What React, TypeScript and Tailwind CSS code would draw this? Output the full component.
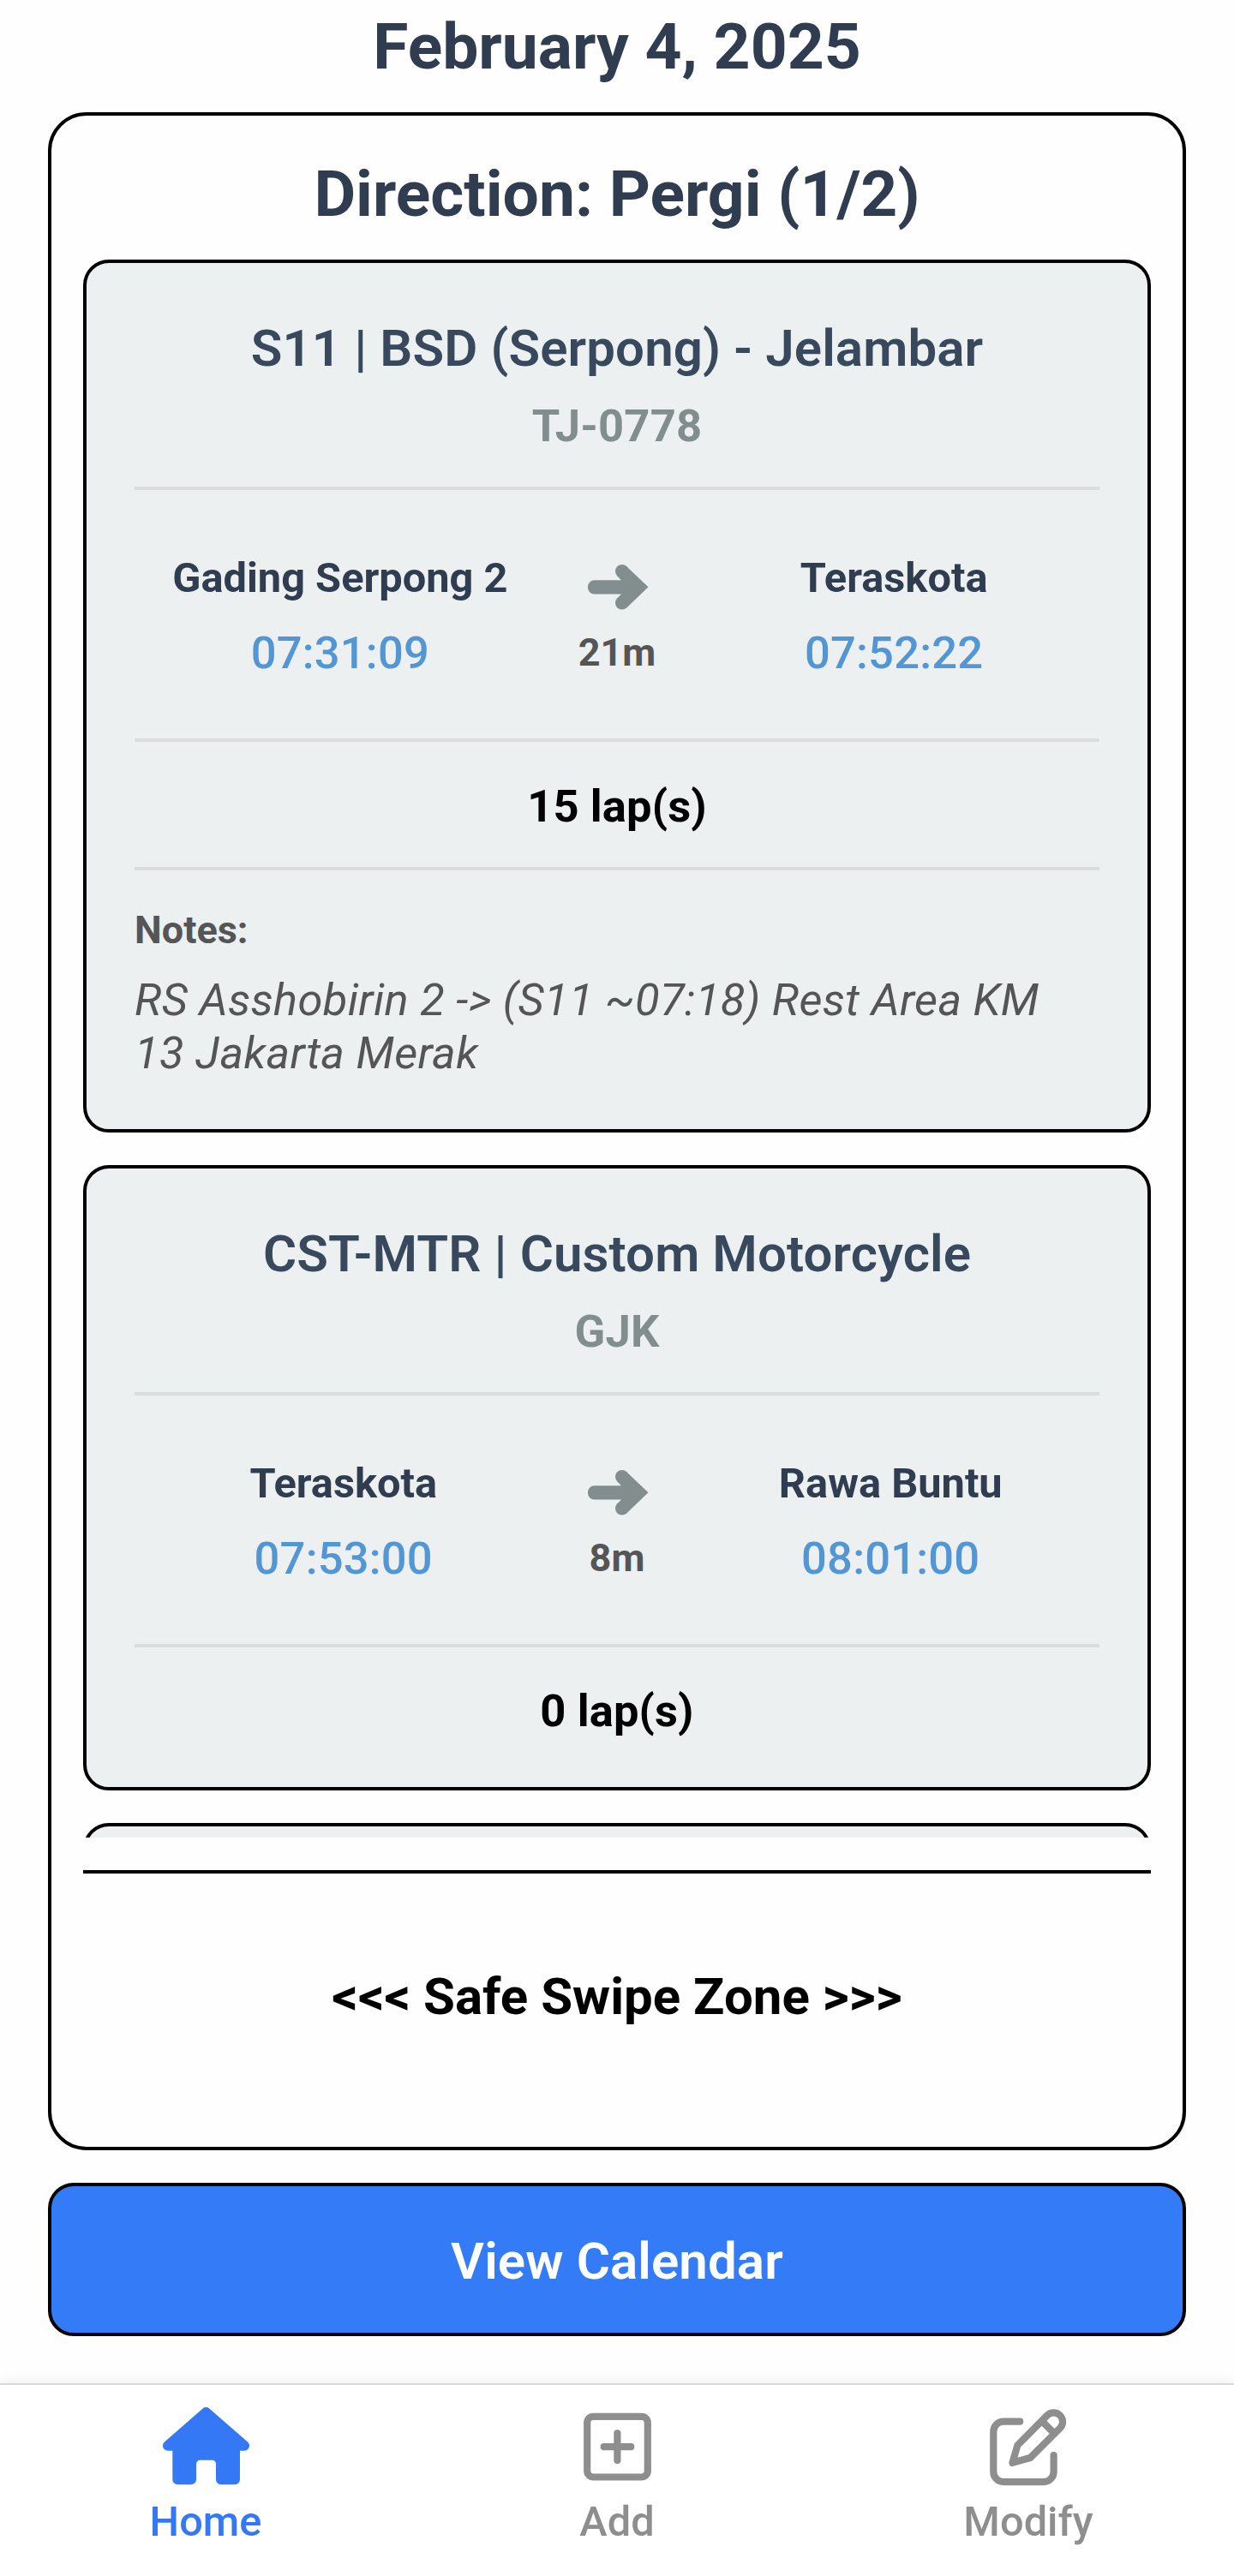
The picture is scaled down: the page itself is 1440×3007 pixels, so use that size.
import React from "react";

type Stop = { name: string; time: string };
type Trip = {
  title: string;
  vehicle: string;
  from: Stop;
  to: Stop;
  duration: string;
  laps: number;
  notes?: string;
};

const trips: Trip[] = [
  {
    title: "S11 | BSD (Serpong) - Jelambar",
    vehicle: "TJ-0778",
    from: { name: "Gading Serpong 2", time: "07:31:09" },
    to: { name: "Teraskota", time: "07:52:22" },
    duration: "21m",
    laps: 15,
    notes: "RS Asshobirin 2 -> (S11 ~07:18) Rest Area KM 13 Jakarta Merak",
  },
  {
    title: "CST-MTR | Custom Motorcycle",
    vehicle: "GJK",
    from: { name: "Teraskota", time: "07:53:00" },
    to: { name: "Rawa Buntu", time: "08:01:00" },
    duration: "8m",
    laps: 0,
  },
];

function ArrowIcon() {
  return (
    <svg className="block h-[60px] w-[75px]" viewBox="3 0 75 60" fill="#828e8d">
      <rect x="6" y="22.2" width="56" height="16.3" rx="7.6" />
      <circle cx="45.8" cy="11.8" r="7.8" />
      <circle cx="45.8" cy="48.8" r="7.8" />
      <path d="M51.2 6.2 76.5 30.3 51.2 54.4 40.2 43.4 45 38.5V22.2L40.2 17.2Z" />
    </svg>
  );
}

function HomeIcon() {
  return (
    <svg className="block h-[140px] w-[160px]" viewBox="0 0 160 140" fill="#3478f6">
      <path d="M76.6 31.6a5.6 5.6 0 0 1 7.6 0L129 70.5c1.400 1.300 2 2.700 2 4.500a5.700 5.700 0 0 1-5.700 5.700H120v33.600a6 6 0 0 1-6 6H98a6 6 0 0 1-6-6V96.200a4.500 4.500 0 0 0-4.500-4.500h-14a4.500 4.500 0 0 0-4.500 4.500v18.100a6 6 0 0 1-6 6H47.300a6 6 0 0 1-6-6V80.700h-5.600A5.700 5.700 0 0 1 30 75c0-1.800.6-3.200 2-4.500Z" />
    </svg>
  );
}

function AddIcon() {
  return (
    <svg className="block h-[140px] w-[160px]" viewBox="0 0 160 140" fill="none" stroke="#8e8e8e" strokeWidth="8.200" strokeLinecap="round">
      <rect x="45.200" y="40.900" width="70.600" height="70.600" rx="7.200" />
      <path d="M80.400 60.400v31.700M64.700 76.200h31.600" />
    </svg>
  );
}

function ModifyIcon() {
  return (
    <svg className="block h-[140px] w-[160px]" viewBox="0 0 160 140" fill="none" stroke="#8e8e8e" strokeWidth="8.200" strokeLinecap="round" strokeLinejoin="round">
      <path d="M70.200 46.700H51a11.700 11.700 0 0 0-11.700 11.700v47a11.700 11.700 0 0 0 11.700 11.700h46.900a11.700 11.700 0 0 0 11.700-11.700V86" />
      <path d="M61.400 94.800 67.400 74.400 102 39.500a10.500 10.500 0 0 1 15 0 10.500 10.500 0 0 1 0 14.800L82.200 89Z" />
      <path d="m96.200 46.500 13.600 13.700" strokeLinecap="butt" />
    </svg>
  );
}

function Divider() {
  return <div className="h-1 bg-[#dcdcdc]" />;
}

function StopColumn({ stop }: { stop: Stop }) {
  return (
    <div className="flex-1 text-center">
      <div className="text-[48.75px] leading-[60px] font-bold text-[#303d50]">{stop.name}</div>
      <div className="mt-[26px] text-[52.5px] leading-[62px] font-medium tracking-[0.2px] text-[#5396d4]">{stop.time}</div>
    </div>
  );
}

function TripCard({ trip }: { trip: Trip }) {
  return (
    <article className="shrink-0 rounded-[30px] border-4 border-black bg-[#ecf0f1] px-[56px]">
      <header className="pt-[65px] pb-[40px] text-center">
        <h2 className="text-[60px] leading-[70px] font-semibold tracking-[0.1px] text-[#38485d]">{trip.title}</h2>
        <div className="mt-[24px] text-[52.5px] leading-[62px] font-bold tracking-[0.15px] text-[#828e8d]">{trip.vehicle}</div>
      </header>
      <Divider />
      <div className="flex h-[290px] pt-[73px]">
        <StopColumn stop={trip.from} />
        <div className="flex flex-col items-center px-[38px] pt-[10px]">
          <ArrowIcon />
          <div className="mt-[20px] text-[45px] leading-[54px] font-bold text-[#555555]">{trip.duration}</div>
        </div>
        <StopColumn stop={trip.to} />
      </div>
      <Divider />
      <div className={trip.notes ? "h-[146px] pt-[44px]" : "h-[163px] pt-[43px]"}>
        <div className="text-center text-[52.5px] leading-[62px] font-bold tracking-[0.1px] text-black">{trip.laps} lap(s)</div>
      </div>
      {trip.notes && (
        <>
          <Divider />
          <div className="pt-[43px] pb-[58px] text-[#555555]">
            <div className="text-[45px] leading-[54px] font-bold">Notes:</div>
            <p className="mt-[23px] pr-4 text-[52.5px] leading-[62px] tracking-[0.3px] italic">{trip.notes}</p>
          </div>
        </>
      )}
    </article>
  );
}

export default function App() {
  const tabs = [
    { label: "Home", icon: <HomeIcon />, color: "text-[#3478f6]" },
    { label: "Add", icon: <AddIcon />, color: "text-[#8e8e8e]" },
    { label: "Modify", icon: <ModifyIcon />, color: "text-[#8e8e8e]" },
  ];
  return (
    <div className="flex h-[3007px] w-[1440px] flex-col overflow-hidden bg-[#fefefe] font-['Roboto',sans-serif]">
      <h1 className="h-[131px] shrink-0 pt-[10px] text-center text-[75px] leading-[88px] font-bold text-[#303d50]">February 4, 2025</h1>
      <main className="mx-[56px] flex h-[2379px] shrink-0 flex-col rounded-[45px] border-4 border-black px-[37px]">
        <h2 className="h-[168px] shrink-0 pt-[47px] text-center text-[75px] leading-[88px] font-bold text-[#303d50]">Direction: Pergi (1/2)</h2>
        <div className="flex h-[1842px] shrink-0 flex-col gap-[38px] overflow-hidden">
          {trips.map((trip) => (
            <TripCard key={trip.title} trip={trip} />
          ))}
          <div className="h-[200px] shrink-0 rounded-[30px] border-4 border-black bg-[#ecf0f1]" />
        </div>
        <div className="mt-[38px] border-t-4 border-black pt-[109px] text-center text-[60px] leading-[70px] font-bold text-black">
          &lt;&lt;&lt; Safe Swipe Zone &gt;&gt;&gt;
        </div>
      </main>
      <button className="mx-[56px] mt-[38px] flex h-[179px] shrink-0 items-center justify-center rounded-[30px] border-4 border-black bg-[#347bf7] pt-[5px] text-[60px] leading-[70px] font-semibold tracking-[0.1px] text-white">
        View Calendar
      </button>
      <nav className="mt-[55px] flex h-[225px] shrink-0 border-t-2 border-[#d8d8d8] bg-white shadow-[0_0_16px_rgba(0,0,0,0.08)]">
        {tabs.map((tab) => (
          <div key={tab.label} className={`flex w-[480px] flex-col items-center ${tab.color}`}>
            <div className="-mt-1 h-[135px]">{tab.icon}</div>
            <div className="text-[48.75px] leading-[58px] font-medium">{tab.label}</div>
          </div>
        ))}
      </nav>
    </div>
  );
}
